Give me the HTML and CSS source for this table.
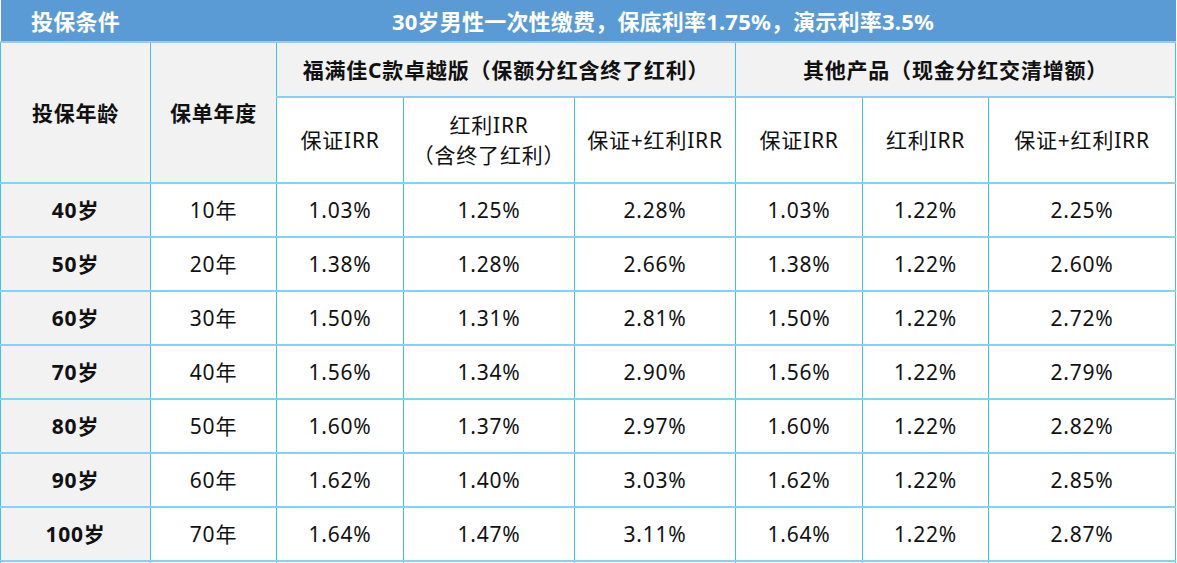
FILE: index.html
```html
<!DOCTYPE html>
<html lang="zh-CN">
<head>
<meta charset="utf-8">
<title>IRR 对比</title>
<link rel="stylesheet" href="styles.css">
</head>
<body>
<table class="irr">
  <colgroup>
    <col class="c1"><col class="c2"><col class="c3"><col class="c4"><col class="c5"><col class="c6"><col class="c7"><col class="c8">
  </colgroup>
  <tr class="title">
    <td>投保条件</td>
    <td colspan="7">30岁男性一次性缴费，保底利率1.75%，演示利率3.5%</td>
  </tr>
  <tr class="head1">
    <td rowspan="2" class="gray bold">投保年龄</td>
    <td rowspan="2" class="gray bold">保单年度</td>
    <td colspan="3" class="gray bold">福满佳C款卓越版（保额分红含终了红利）</td>
    <td colspan="3" class="gray bold">其他产品（现金分红交清增额）</td>
  </tr>
  <tr class="head2">
    <td>保证IRR</td>
    <td>红利IRR<br>（含终了红利）</td>
    <td>保证+红利IRR</td>
    <td>保证IRR</td>
    <td>红利IRR</td>
    <td>保证+红利IRR</td>
  </tr>
  <tr class="row"><td class="gray bold">40岁</td><td>10年</td><td>1.03%</td><td>1.25%</td><td>2.28%</td><td>1.03%</td><td>1.22%</td><td>2.25%</td></tr>
  <tr class="row"><td class="gray bold">50岁</td><td>20年</td><td>1.38%</td><td>1.28%</td><td>2.66%</td><td>1.38%</td><td>1.22%</td><td>2.60%</td></tr>
  <tr class="row"><td class="gray bold">60岁</td><td>30年</td><td>1.50%</td><td>1.31%</td><td>2.81%</td><td>1.50%</td><td>1.22%</td><td>2.72%</td></tr>
  <tr class="row"><td class="gray bold">70岁</td><td>40年</td><td>1.56%</td><td>1.34%</td><td>2.90%</td><td>1.56%</td><td>1.22%</td><td>2.79%</td></tr>
  <tr class="row"><td class="gray bold">80岁</td><td>50年</td><td>1.60%</td><td>1.37%</td><td>2.97%</td><td>1.60%</td><td>1.22%</td><td>2.82%</td></tr>
  <tr class="row"><td class="gray bold">90岁</td><td>60年</td><td>1.62%</td><td>1.40%</td><td>3.03%</td><td>1.62%</td><td>1.22%</td><td>2.85%</td></tr>
  <tr class="row"><td class="gray bold">100岁</td><td>70年</td><td>1.64%</td><td>1.47%</td><td>3.11%</td><td>1.64%</td><td>1.22%</td><td>2.87%</td></tr>
  <tr class="row"><td class="gray"></td><td></td><td></td><td></td><td></td><td></td><td></td><td></td></tr>
</table>
</body>
</html>
```

FILE: styles.css
```css
html, body {
  margin: 0;
  padding: 0;
  background: #ffffff;
  overflow: hidden;
}

.irr {
  border-collapse: collapse;
  table-layout: fixed;
  width: 1175px;
  font-family: "Noto Sans", "Noto Sans CJK SC", sans-serif;
  font-size: 21px;
  color: #111111;
  text-spacing-trim: space-all;
}

.c1 { width: 150px; }
.c2 { width: 126px; }
.c3 { width: 127px; }
.c4 { width: 171px; }
.c5 { width: 161px; }
.c6 { width: 127px; }
.c7 { width: 126px; }
.c8 { width: 187px; }

.irr td {
  padding: 0;
  text-align: center;
  vertical-align: middle;
  line-height: 30px;
  letter-spacing: 0.8px;
  border-left: 1px solid #3fbef2;
  border-right: 1px solid #3fbef2;
  border-top: 2px solid #84d3f5;
  border-bottom: 2px solid #84d3f5;
}

.title td {
  background: #5b9bd5;
  color: #ffffff;
  font-weight: bold;
  font-size: 22px;
  letter-spacing: 0.2px;
  height: 41px;
  border-top: 0;
  border-left: 0;
  border-right: 0;
  border-bottom: 2px solid #9dc8ea;
}

.head1 td {
  height: 53px;
}

.head2 td {
  height: 84px;
}

.row td {
  height: 52px;
}

.gray {
  background: #f2f2f2;
}

.bold {
  font-weight: bold;
}
```
